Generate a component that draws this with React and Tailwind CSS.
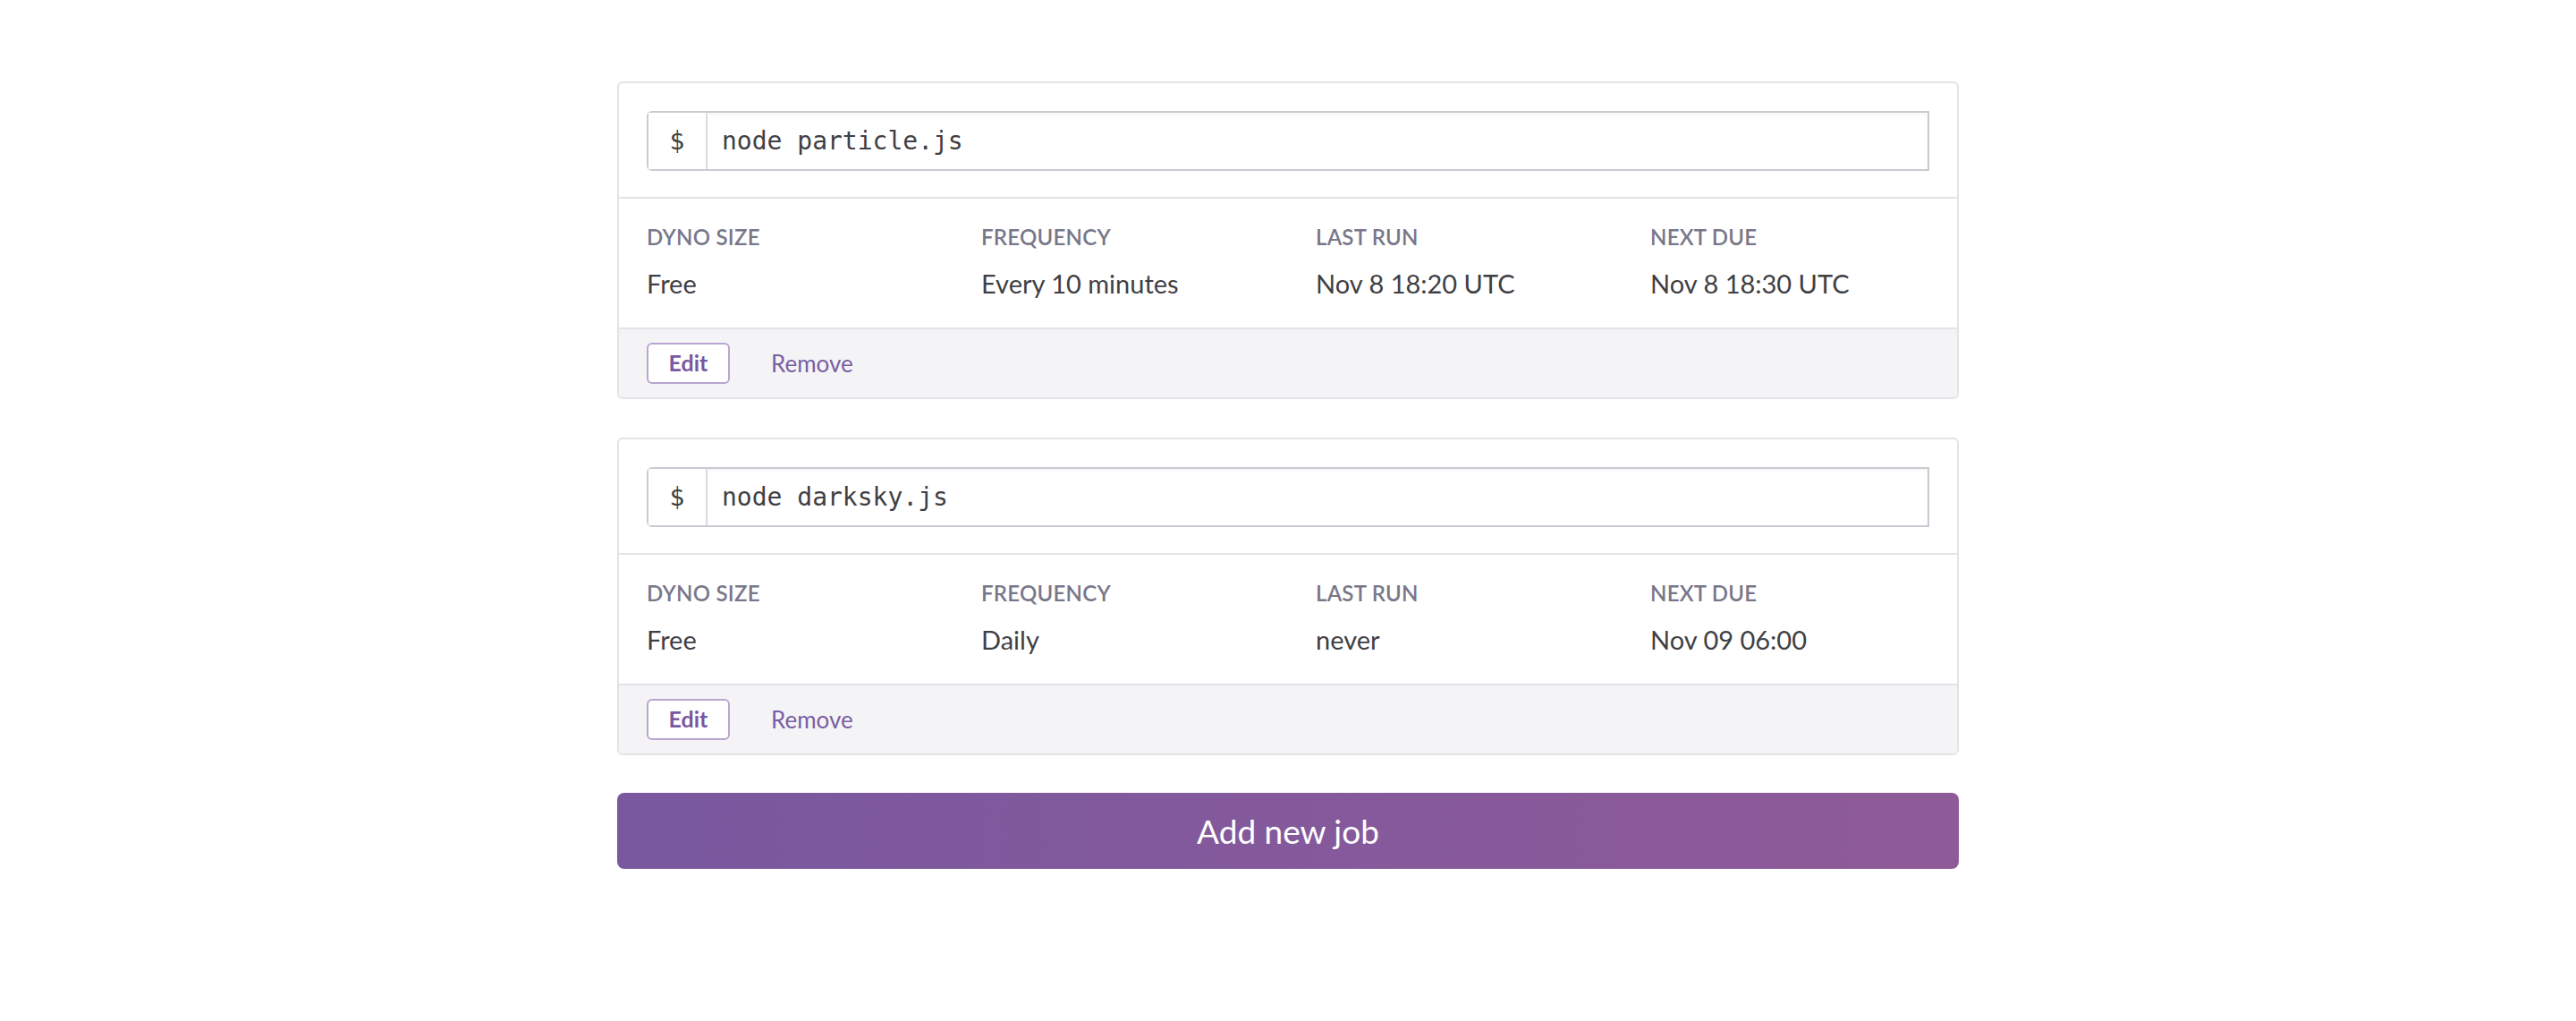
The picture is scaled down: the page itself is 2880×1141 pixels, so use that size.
import React from 'react';

const jobs = [
  {
    command: 'node particle.js',
    stats: [
      { label: 'Dyno Size', value: 'Free' },
      { label: 'Frequency', value: 'Every 10 minutes' },
      { label: 'Last Run', value: 'Nov 8 18:20 UTC' },
      { label: 'Next Due', value: 'Nov 8 18:30 UTC' },
    ],
  },
  {
    command: 'node darksky.js',
    stats: [
      { label: 'Dyno Size', value: 'Free' },
      { label: 'Frequency', value: 'Daily' },
      { label: 'Last Run', value: 'never' },
      { label: 'Next Due', value: 'Nov 09 06:00' },
    ],
  },
];

const JobCard = ({ job }) => (
  <div className="border-2 border-[#e3e3e8] rounded-[6px] overflow-hidden bg-white">
    {/* Command */}
    <div className="px-[31px] pt-[31px] pb-[29px] border-b-2 border-[#e3e3e8]">
      <div className="flex h-[67px] border-2 border-[#cbcad2] rounded-l-[6px] font-['DejaVu_Sans_Mono',monospace] text-[28px] text-[#3f3f44]">
        <div className="w-[66px] flex items-center justify-center border-r-2 border-[#dddce2] bg-white">$</div>
        <div className="flex-1 flex items-center pl-4 shadow-[inset_0_2px_3px_rgba(0,0,0,0.04)]">{job.command}</div>
      </div>
    </div>

    {/* Stats */}
    <div className="grid grid-cols-4 gap-x-[62px] px-[31px] pt-[27px] pb-[31px] border-b-2 border-[#e3e3e8]">
      {job.stats.map((s, i) => (
        <div key={i} className="flex flex-col">
          <div className="text-[24px] leading-[32px] font-semibold uppercase text-[#787789] tracking-[0.01em]">{s.label}</div>
          <div className="mt-[18px] text-[29px] leading-[36px] text-[#3f3f44]">{s.value}</div>
        </div>
      ))}
    </div>

    {/* Actions */}
    <div className="bg-[#f4f4f7] px-[31px] py-[15px] flex items-center">
      <button className="w-[93px] h-[46px] flex items-center justify-center border-2 border-[#b9a5d0] rounded-[6px] bg-white text-[25px] font-bold text-[#79589f]">
        Edit
      </button>
      <button className="ml-[46px] text-[26px] text-[#7a5ea3]">Remove</button>
    </div>
  </div>
);

export default function App() {
  return (
    <div className="min-h-screen bg-white pt-[91px] font-['Lato',sans-serif]">
      <div className="w-[1500px] mx-auto flex flex-col">
        <div className="flex flex-col gap-[43px]">
          {jobs.map((job, i) => (
            <JobCard key={i} job={job} />
          ))}
        </div>
        <button className="mt-[42px] h-[85px] w-full rounded-[8px] bg-gradient-to-r from-[#79589f] to-[#8f5a98] text-white text-[37px] flex items-center justify-center">
          Add new job
        </button>
      </div>
    </div>
  );
}
